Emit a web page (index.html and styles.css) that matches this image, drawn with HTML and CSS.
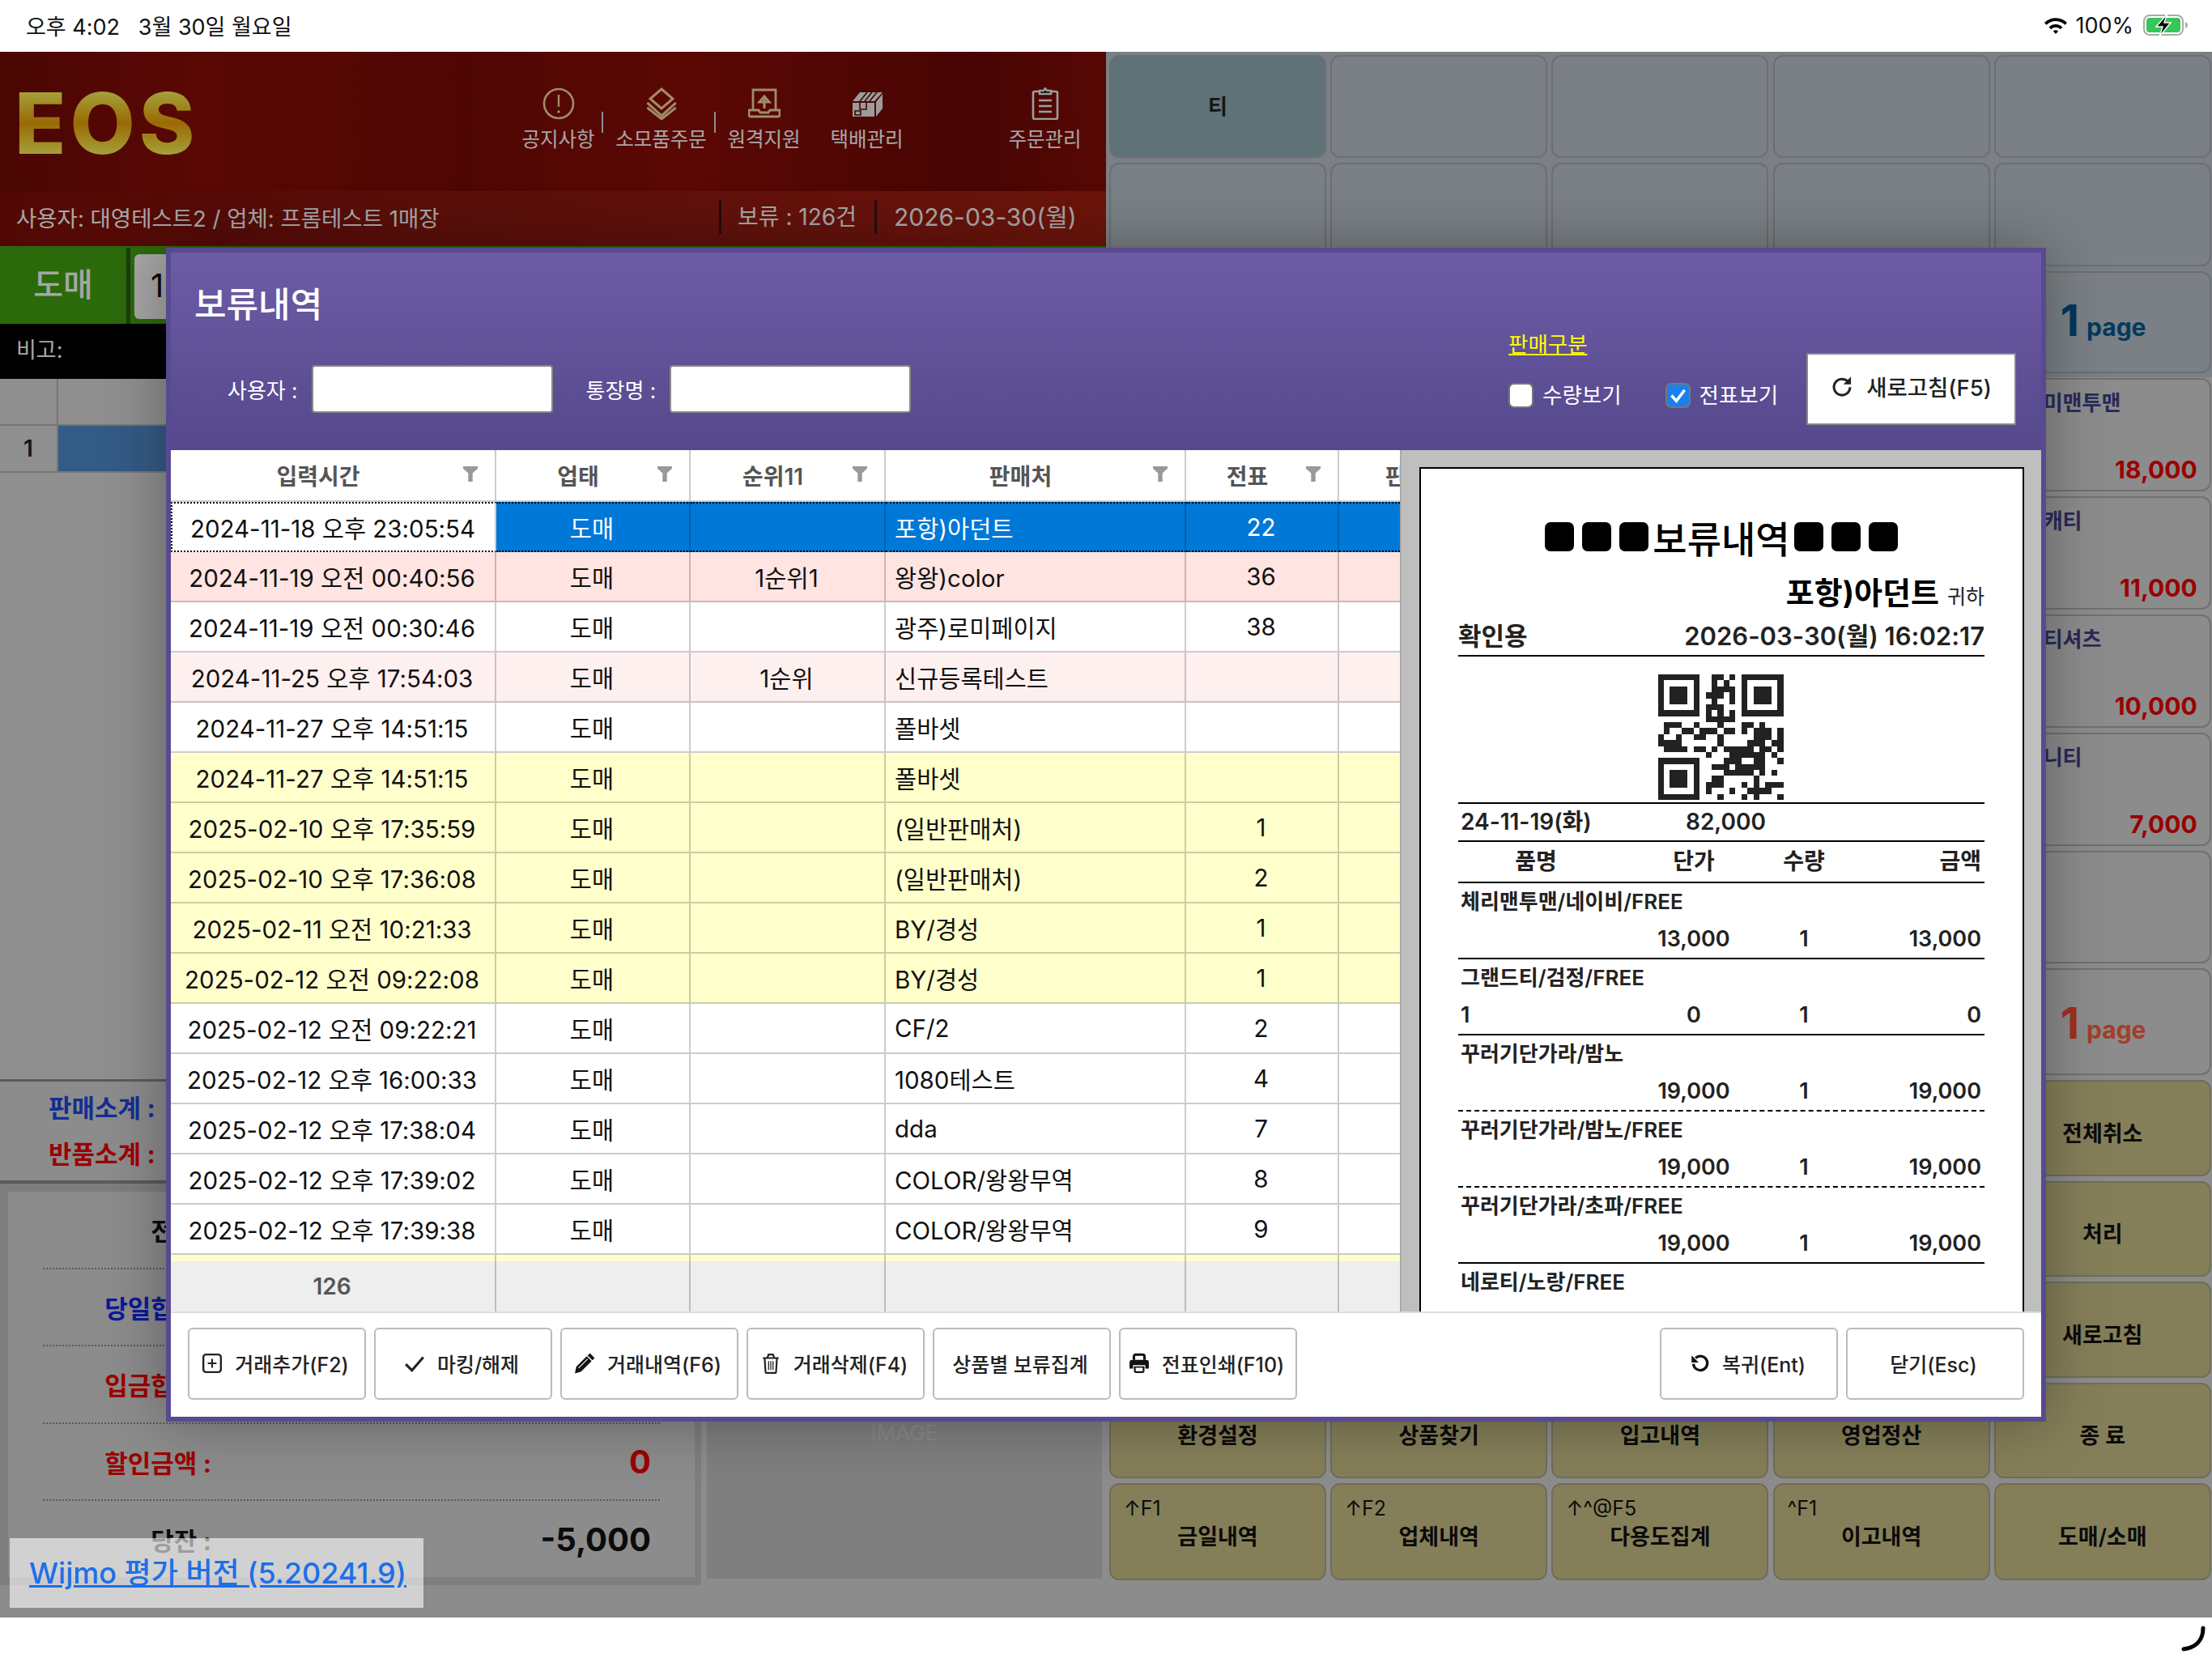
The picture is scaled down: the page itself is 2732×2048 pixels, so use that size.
FILE: index.html
```html
<!DOCTYPE html>
<html lang="ko">
<head>
    <meta charset="UTF-8">
    <title>보류내역</title>
    <link rel="stylesheet" href="styles.css">
</head>
<body>
    <div class="status-bar">
        <span>오후 4:02&nbsp;&nbsp;&nbsp;3월 30일 월요일</span>
        <div class="status-right">
            <svg class="wifi" viewBox="0 0 30 22"><path d="M1 8a20 20 0 0 1 28 0l-2.600 2.800a16 16 0 0 0-22.800 0zM6.600 13.400a12 12 0 0 1 16.800 0l-2.700 2.800a8 8 0 0 0-11.400 0zM11.800 18.600a4.600 4.600 0 0 1 6.400 0L15 22z" fill="#000"/></svg>
            <span>100%</span>
            <svg class="battery" viewBox="0 0 56 28"><rect x="1" y="2" width="48" height="24" rx="7" fill="none" stroke="#aaa" stroke-width="2"/><rect x="4" y="5" width="42" height="18" rx="4" fill="#34c759"/><path d="M52 10c2 1 3 2 3 4s-1 3-3 4z" fill="#aaa"/><path d="M30 0 16 16h8l-4 12 14-17h-8z" fill="#000" stroke="#fff" stroke-width="1.500"/></svg>
        </div>
    </div>

    <div class="app">
        <div class="pos-left">
            <div class="brand-bar">
                <div class="logo">EOS</div>
                <div class="top-nav">
                    <div class="nav-item sep">
                        <svg class="nav-icon tan" viewBox="0 0 40 40"><circle cx="20" cy="20" r="18" fill="none" stroke-width="2.600"/><path d="M20 9v15" stroke-width="2.400"/><circle class="dot" cx="20" cy="30" r="1.800"/></svg>
                        <span>공지사항</span>
                    </div>
                    <div class="nav-item sep sep-wide">
                        <svg class="nav-icon tan" viewBox="0 0 40 40"><path d="M20 2 34 14 20 26 6 14z" fill="none" stroke-width="3"/><path d="M1 19l19 16 19-16M1 25l19 14 19-14" fill="none" stroke-width="3" transform="translate(1.500 0) scale(.93 1)"/></svg>
                        <span>소모품주문</span>
                    </div>
                    <div class="nav-item">
                        <svg class="nav-icon tan" viewBox="0 0 40 40"><path d="M6 27V3h28v24M1 28h12l2 3h10l2-3h12v6a2 2 0 0 1-2 2H3a2 2 0 0 1-2-2z" fill="none" stroke-width="2.800"/><path d="M20 26V13M14 18l6-7 6 7z" stroke-width="3"/></svg>
                        <span>원격지원</span>
                    </div>
                    <div class="nav-item">
                        <svg class="nav-icon" viewBox="0 0 40 40"><path class="box" d="M2 17 11 6h28L29 17zM2 19h27v17H2zM31 18l8-10v18l-8 10z"/><path d="M11 17l9-11M17 17l9-11M23 17l9-11M11 19v8h8v-8M5 29h7v5H5z" stroke="#5a0806" stroke-width="1.600" fill="none"/></svg>
                        <span>택배관리</span>
                    </div>
                    <div class="nav-item last">
                        <svg class="nav-icon grey" viewBox="0 0 40 40"><path d="M13 5H7a2 2 0 0 0-2 2v30a2 2 0 0 0 2 2h26a2 2 0 0 0 2-2V7a2 2 0 0 0-2-2h-6" fill="none" stroke-width="2.600"/><path d="M13 4h5l2-3 2 3h5v4H13z" stroke-width="2.400"/><path d="M12 16h16M12 23h16M12 30h16" stroke-width="2.600"/></svg>
                        <span>주문관리</span>
                    </div>
                </div>
            </div>
            <div class="user-bar">
                <span class="user-name">사용자: 대영테스트2 / 업체: 프롬테스트 1매장</span>
                <span class="hold-count">보류 : 126건</span>
                <span class="today">2026-03-30(월)</span>
            </div>
            <div class="trade-row">
                <div class="trade-type">도매</div>
                <div class="trade-input">1</div>
            </div>
            <div class="memo-row">비고:</div>
            <div class="item-grid">
                <div class="item-line"><div class="item-no"></div><div class="item-cell"></div></div>
                <div class="item-line"><div class="item-no">1</div><div class="item-cell picked"></div></div>
            </div>
            <div class="subtotal">
                <div class="blue">판매소계 :</div>
                <div class="red">반품소계 :</div>
            </div>
            <div class="bottom-panels">
                <div class="summary-wrap">
                    <div class="summary">
                        <div class="sum-row"><b>전잔 :</b><em></em></div>
                        <div class="sum-row blue"><b>당일합계 :</b><em></em></div>
                        <div class="sum-row red"><b>입금합계 :</b><em></em></div>
                        <div class="sum-row red"><b>할인금액 :</b><em>0</em></div>
                        <div class="sum-row"><b>당잔 :</b><em>-5,000</em></div>
                    </div>
                </div>
                <div class="image-box">IMAGE</div>
            </div>
        </div>

        <div class="pos-right">
            <div class="tile-grid">
                <div class="tile cat">티</div><div class="tile"></div><div class="tile"></div><div class="tile"></div><div class="tile"></div>
                <div class="tile"></div><div class="tile"></div><div class="tile"></div><div class="tile"></div><div class="tile"></div>
                <div class="tile tile-last page-tile"><b>1</b><span>page</span></div>
                <div class="tile tile-last goods"><p>체미맨투맨</p><strong>18,000</strong></div>
                <div class="tile tile-last goods"><p>베캐티</p><strong>11,000</strong></div>
                <div class="tile tile-last goods"><p>반티셔츠</p><strong>10,000</strong></div>
                <div class="tile tile-last goods"><p>유니티</p><strong>7,000</strong></div>
                <div class="tile tile-last goods"></div>
                <div class="tile tile-last goods page-tile red-page"><b>1</b><span>page</span></div>
                <div class="tile tile-last func">전체취소</div>
                <div class="tile tile-last func">처리</div>
                <div class="tile tile-last func">새로고침</div>
                <div class="tile func">환경설정</div><div class="tile func">상품찾기</div><div class="tile func">입고내역</div><div class="tile func">영업정산</div><div class="tile func">종 료</div>
                <div class="tile func"><i>↑F1</i>금일내역</div><div class="tile func"><i>↑F2</i>업체내역</div><div class="tile func"><i>↑^@F5</i>다용도집계</div><div class="tile func"><i>^F1</i>이고내역</div><div class="tile func">도매/소매</div>
            </div>
        </div>

        <div class="dim"></div>

        <div class="wijmo-badge"><a href="#">Wijmo 평가 버전 (5.20241.9)</a></div>

        <div class="modal">
            <div class="modal-head">
                <div class="head-left">
                    <h2>보류내역</h2>
                    <div class="search-row">
                        <label>사용자 :</label><div class="text-input"></div>
                        <label class="second">통장명 :</label><div class="text-input"></div>
                    </div>
                </div>
                <div class="head-right">
                    <div class="view-opts">
                        <a href="#">판매구분</a>
                        <div class="checks">
                            <label><span class="check-box"></span>수량보기</label>
                            <label><span class="check-box on"><svg viewBox="0 0 20 20"><path d="M4 10l4.500 5L16 5" fill="none" stroke="#fff" stroke-width="2.600"/></svg></span>전표보기</label>
                        </div>
                    </div>
                    <button class="refresh-btn">
                        <svg viewBox="0 0 24 24"><path d="M18.500 7.500A8.500 8.500 0 1 0 20.500 13" fill="none" stroke="#222" stroke-width="2.600"/><path d="M21.500 2v8h-8z" fill="#222"/></svg>
                        새로고침(F5)
                    </button>
                </div>
            </div>

            <div class="modal-body">
                <div class="hold-grid">
                    <table>
                        <colgroup><col class="c1"><col class="c2"><col class="c3"><col class="c4"><col class="c5"><col class="c6"></colgroup>
                        <thead>
                            <tr><th>입력시간<i class="funnel"></i></th><th>업태<i class="funnel"></i></th><th>순위11<i class="funnel"></i></th><th>판매처<i class="funnel"></i></th><th>전표<i class="funnel"></i></th><th>판매구분</th></tr>
                        </thead>
                        <tbody>
                            <tr class="selected"><td>2024-11-18 오후 23:05:54</td><td>도매</td><td></td><td class="left">포항)아던트</td><td>22</td><td></td></tr>
                            <tr class="rose"><td>2024-11-19 오전 00:40:56</td><td>도매</td><td>1순위1</td><td class="left">왕왕)color</td><td>36</td><td></td></tr>
                            <tr><td>2024-11-19 오전 00:30:46</td><td>도매</td><td></td><td class="left">광주)로미페이지</td><td>38</td><td></td></tr>
                            <tr class="pink"><td>2024-11-25 오후 17:54:03</td><td>도매</td><td>1순위</td><td class="left">신규등록테스트</td><td></td><td></td></tr>
                            <tr><td>2024-11-27 오후 14:51:15</td><td>도매</td><td></td><td class="left">폴바셋</td><td></td><td></td></tr>
                            <tr class="yellow"><td>2024-11-27 오후 14:51:15</td><td>도매</td><td></td><td class="left">폴바셋</td><td></td><td></td></tr>
                            <tr class="yellow"><td>2025-02-10 오후 17:35:59</td><td>도매</td><td></td><td class="left">(일반판매처)</td><td>1</td><td></td></tr>
                            <tr class="yellow"><td>2025-02-10 오후 17:36:08</td><td>도매</td><td></td><td class="left">(일반판매처)</td><td>2</td><td></td></tr>
                            <tr class="yellow"><td>2025-02-11 오전 10:21:33</td><td>도매</td><td></td><td class="left">BY/경성</td><td>1</td><td></td></tr>
                            <tr class="yellow"><td>2025-02-12 오전 09:22:08</td><td>도매</td><td></td><td class="left">BY/경성</td><td>1</td><td></td></tr>
                            <tr><td>2025-02-12 오전 09:22:21</td><td>도매</td><td></td><td class="left">CF/2</td><td>2</td><td></td></tr>
                            <tr><td>2025-02-12 오후 16:00:33</td><td>도매</td><td></td><td class="left">1080테스트</td><td>4</td><td></td></tr>
                            <tr><td>2025-02-12 오후 17:38:04</td><td>도매</td><td></td><td class="left">dda</td><td>7</td><td></td></tr>
                            <tr><td>2025-02-12 오후 17:39:02</td><td>도매</td><td></td><td class="left">COLOR/왕왕무역</td><td>8</td><td></td></tr>
                            <tr><td>2025-02-12 오후 17:39:38</td><td>도매</td><td></td><td class="left">COLOR/왕왕무역</td><td>9</td><td></td></tr>
                            <tr class="yellow sliver"><td></td><td></td><td></td><td></td><td></td><td></td></tr>
                        </tbody>
                        <tfoot>
                            <tr><td>126</td><td></td><td></td><td></td><td></td><td></td></tr>
                        </tfoot>
                    </table>
                </div>

                <div class="preview">
                    <div class="paper">
                        <div class="slip-title"><i></i><i></i><i></i><span>보류내역</span><i></i><i></i><i></i></div>
                        <div class="slip-to"><b>포항)아던트</b><span>귀하</span></div>
                        <div class="slip-info"><span>확인용</span><span>2026-03-30(월) 16:02:17</span></div>
                        <svg class="qr" viewBox="0 0 21 21" shape-rendering="crispEdges">
                            <path d="M0 0h7v7H0zM1 1v5h5V1zM14 0h7v7h-7zM15 1v5h5V1zM0 14h7v7H0zM1 15v5h5v-5z" fill="#222" fill-rule="evenodd"/>
                            <path d="M2 2h3v3H2zM16 2h3v3h-3zM2 16h3v3H2z" fill="#222"/>
                            <path stroke="#222" fill="none" d="M9 .5h2M12 .5h1M9 1.500h1M11 1.500h1M9 2.500h4M8 3.500h3M12 3.500h1M9 4.500h1M12 4.500h1M8 5.500h3M8 6.500h1M10 6.500h1M12 6.500h1M8 7.500h5M1 8.500h3M6 8.500h1M10 8.500h1M14 8.500h2M17 8.500h1M1 9.500h1M4 9.500h2M7 9.500h3M11 9.500h2M14 9.500h1M16 9.500h3M20 9.500h1M0 10.500h1M3 10.500h1M6 10.500h2M10 10.500h1M16 10.500h3M20 10.500h1M0 11.500h4M10 11.500h1M15 11.500h3M19 11.500h2M1 12.500h4M6 12.500h2M9 12.500h1M11 12.500h5M17 12.500h2M20 12.500h1M8 13.500h1M12 13.500h6M19 13.500h1M11 14.500h3M16 14.500h2M20 14.500h1M9 15.500h3M13 15.500h5M11 16.500h5M17 16.500h1M19 16.500h1M9 17.500h2M16 17.500h1M8 18.500h3M14 18.500h1M16 18.500h1M18 18.500h3M8 19.500h1M12 19.500h1M15 19.500h4M10 20.500h1M14 20.500h1M16 20.500h1M20 20.500h1"/>
                        </svg>
                        <div class="slip-date"><span>24-11-19(화)</span><span>82,000</span></div>
                        <div class="slip-cols"><span>품명</span><span>단가</span><span>수량</span><span>금액</span></div>
                        <div class="slip-item">
                            <p>체리맨투맨/네이비/FREE</p>
                            <div class="slip-vals"><span></span><span>13,000</span><span>1</span><span>13,000</span></div>
                        </div>
                        <div class="slip-item">
                            <p>그랜드티/검정/FREE</p>
                            <div class="slip-vals"><span>1</span><span>0</span><span>1</span><span>0</span></div>
                        </div>
                        <div class="slip-item dashed">
                            <p>꾸러기단가라/밤노</p>
                            <div class="slip-vals"><span></span><span>19,000</span><span>1</span><span>19,000</span></div>
                        </div>
                        <div class="slip-item dashed">
                            <p>꾸러기단가라/밤노/FREE</p>
                            <div class="slip-vals"><span></span><span>19,000</span><span>1</span><span>19,000</span></div>
                        </div>
                        <div class="slip-item">
                            <p>꾸러기단가라/초파/FREE</p>
                            <div class="slip-vals"><span></span><span>19,000</span><span>1</span><span>19,000</span></div>
                        </div>
                        <div class="slip-item">
                            <p>네로티/노랑/FREE</p>
                        </div>
                    </div>
                </div>
            </div>

            <div class="modal-foot">
                <button>
                    <svg viewBox="0 0 24 24"><rect x="2" y="2" width="20" height="20" rx="3" fill="none" stroke="#222" stroke-width="2.200"/><path d="M12 7v10M7 12h10" stroke="#222" stroke-width="2"/></svg>
                    거래추가(F2)
                </button>
                <button>
                    <svg viewBox="0 0 24 24"><path d="M2 13l7 7L22 5" fill="none" stroke="#222" stroke-width="2.800"/></svg>
                    마킹/해제
                </button>
                <button>
                    <svg viewBox="0 0 24 24"><path d="M18 .5l5.500 5.500-2.500 2.500-5.500-5.500zM14.500 4l5.500 5.500L8 21.500 1 23.500 2.500 16z" fill="#111"/><path d="M5 17.500 15.500 7" stroke="#fff" stroke-width="1"/></svg>
                    거래내역(F6)
                </button>
                <button>
                    <svg viewBox="0 0 24 24"><path d="M3 6h18M8 6l1.500-4h5L16 6M5 6l1 16a1 1 0 0 0 1 1h10a1 1 0 0 0 1-1l1-16" fill="none" stroke="#222" stroke-width="2"/><path d="M9.500 9.500v10M12 9.500v10M14.500 9.500v10" stroke="#222" stroke-width="1.200"/></svg>
                    거래삭제(F4)
                </button>
                <button>상품별 보류집계</button>
                <button>
                    <svg viewBox="0 0 24 24"><path d="M6 8V4a2 2 0 0 1 2-2h8a2 2 0 0 1 2 2v4" fill="none" stroke="#111" stroke-width="2.800"/><path d="M4 8h16a3 3 0 0 1 3 3v7h-4v-4H5v4H1v-7a3 3 0 0 1 3-3z" fill="#111"/><path d="M6 15.500h12V21a2 2 0 0 1-2 2H8a2 2 0 0 1-2-2z" fill="#111"/><rect x="8" y="17" width="8" height="4" fill="#fff"/></svg>
                    전표인쇄(F10)
                </button>
                <div class="foot-gap"></div>
                <button>
                    <svg viewBox="0 0 24 24"><path d="M5 12.500a8 8 0 1 0 2.500-6.500" fill="none" stroke="#111" stroke-width="3"/><path d="M3 3v8h8z" fill="#111"/></svg>
                    복귀(Ent)
                </button>
                <button>닫기(Esc)</button>
            </div>
        </div>
    </div>

    <div class="home-bar">
        <svg viewBox="0 0 32 32"><path d="M28 3c0 14-8 24-24 26" fill="none" stroke="#000" stroke-width="5" stroke-linecap="round"/></svg>
    </div>
</body>
</html>
```

FILE: styles.css
```css
* {
    box-sizing: border-box;
}

body {
    margin: 0;
    width: 2732px;
    height: 2048px;
    overflow: hidden;
    display: flex;
    flex-direction: column;
    background-color: #fff;
    color: #222;
    font-family: Inter, "Noto Sans CJK KR", sans-serif;
}

/* 상단 상태바 */
.status-bar {
    height: 64px;
    padding: 0 29px 2px 32px;
    display: flex;
    justify-content: space-between;
    align-items: center;
    font-size: 27px;
    color: #111;
}

.status-right {
    display: flex;
    align-items: center;
    gap: 9px;
}

.wifi {
    width: 30px;
    height: 22px;
}

.battery {
    width: 56px;
    height: 28px;
    margin-left: 3px;
}

.app {
    position: relative;
    height: 1934px;
    display: flex;
    background-color: #d7d7d7;
}

.dim {
    position: absolute;
    inset: 0;
    background-color: rgba(0, 0, 0, 0.35);
}

.home-bar {
    height: 50px;
    padding: 10px 7px 0 0;
    display: flex;
    justify-content: flex-end;
}

.home-bar svg {
    width: 32px;
    height: 32px;
}

/* 왼쪽 POS 영역 */
.pos-left {
    width: 1366px;
    padding-bottom: 40px;
    display: flex;
    flex-direction: column;
}

.brand-bar {
    height: 172px;
    display: flex;
    padding-left: 18px;
    background: linear-gradient(90deg, #720a06 0%, #8a0d07 18%, #7a0a05 42%, #8c0d07 62%, #6e0805 88%, #860c07 100%);
}

.logo {
    width: 232px;
    margin-top: 33px;
    font-weight: 800;
    font-size: 104px;
    letter-spacing: 5px;
    line-height: 110px;
    height: 110px;
    white-space: nowrap;
    color: transparent;
    background: linear-gradient(180deg, #fffe5f 12%, #eda308 50%, #fffe5f 88%);
    background-clip: text;
    -webkit-background-clip: text;
}

.top-nav {
    display: flex;
    margin-left: 376px;
    padding-top: 44px;
}

.nav-item {
    position: relative;
    width: 127px;
    display: flex;
    flex-direction: column;
    align-items: center;
    font-size: 24.5px;
    line-height: 34px;
    color: #fff;
}

.nav-item.last {
    margin-left: 93px;
}

.nav-item.sep::after {
    content: "";
    position: absolute;
    right: 8px;
    top: 30px;
    width: 2px;
    height: 26px;
    background-color: #ddd;
}

.nav-item.sep-wide::after {
    right: -4px;
}

.nav-icon {
    width: 40px;
    height: 40px;
    margin-bottom: 7px;
}

.nav-icon.tan path, .nav-icon.tan circle {
    stroke: #f6d7a0;
}

.nav-icon.tan .dot {
    fill: #f6d7a0;
    stroke: none;
}

.nav-icon.grey path {
    stroke: #f2f2f2;
}

.nav-icon .box {
    fill: #f0f0f0;
}

.user-bar {
    height: 68px;
    display: flex;
    align-items: center;
    padding: 0 0 4px 20px;
    font-size: 27.5px;
    color: #fff;
    background: linear-gradient(90deg, #7e0c06 0%, #8c1810 40%, #a52012 100%);
}

.user-name {
    width: 868px;
}

.hold-count, .today {
    height: 42px;
    line-height: 42px;
    border-left: 3px solid #3a1414;
    padding-left: 20px;
}

.hold-count {
    width: 192px;
    font-size: 28px;
}

.today {
    padding-left: 21px;
    font-size: 30px;
}

.trade-row {
    height: 96px;
    display: flex;
    background-color: #42a312;
    border-top: 2px solid #42a312;
}

.trade-type {
    width: 161px;
    border-right: 5px solid #2c5c18;
    text-align: center;
    font-size: 40px;
    line-height: 92px;
    font-weight: 500;
    color: #fff;
}

.trade-input {
    margin: 8px 0 6px 5px;
    width: 200px;
    padding-left: 20px;
    border-radius: 6px;
    background-color: #fff;
    font-size: 40px;
    line-height: 78px;
    color: #111;
}

.memo-row {
    height: 68px;
    padding-left: 20px;
    background-color: #000;
    color: #fff;
    font-size: 27px;
    line-height: 66px;
}

.item-grid {
    flex: 1;
    background-color: #dcdcdc;
}

.item-line {
    display: flex;
    height: 58px;
    border-bottom: 2px solid #b5b5b5;
}

.item-no {
    width: 72px;
    border-right: 2px solid #b5b5b5;
    text-align: center;
    font-size: 28px;
    line-height: 56px;
    font-weight: 600;
}

.item-cell {
    flex: 1;
}

.item-cell.picked {
    background-color: #508ccd;
}

.subtotal {
    height: 129px;
    padding: 4px 0 0 60px;
    border-top: 3px solid #8a8a95;
    border-bottom: 4px solid #8a8a95;
    font-size: 31px;
    line-height: 57px;
    font-weight: 700;
}

.blue {
    color: #1f48e0;
}

.red {
    color: #f20000;
}

.bottom-panels {
    height: 496px;
    display: flex;
    background-color: #d7d7d7;
}

.summary-wrap {
    width: 866px;
    padding: 10px 8px 10px 10px;
    background-color: #c2c2c2;
}

.summary {
    height: 100%;
    padding: 0 43px 0 43px;
    display: flex;
    flex-direction: column;
    background-color: #d7d7d7;
}

.sum-row {
    flex: 1;
    display: flex;
    justify-content: space-between;
    align-items: center;
    padding-right: 11px;
    border-bottom: 2px dotted #888;
    color: #111;
}

.sum-row:last-child {
    border-bottom: none;
}

.sum-row.blue {
    color: #1028ee;
}

.sum-row.red {
    color: #f20000;
}

.sum-row b {
    width: 208px;
    text-align: right;
    font-size: 31px;
}

.sum-row em {
    font-style: normal;
    font-weight: 700;
    font-size: 40px;
}

.image-box {
    width: 488px;
    margin-left: 7px;
    margin-bottom: 8px;
    background-color: #c4c4c4;
    text-align: center;
    color: #d4d4d4;
    font-size: 26px;
    padding-top: 292px;
}

/* 오른쪽 버튼 영역 */
.pos-right {
    flex: 1;
    padding: 4px 0 0 4px;
    background: linear-gradient(180deg, #bcc5cd 0, #bcc5cd 402px, #d7d7d7 402px);
}

.tile-grid {
    display: grid;
    grid-template-columns: repeat(5, 268px);
    grid-template-rows: 127px 128px 126px 140px 140px 140px 140px 139px 132px 119px 118px 119px 118px 120px;
    column-gap: 5.2px;
    row-gap: 6px;
}

.tile {
    position: relative;
    border: 2px solid #a5abb0;
    border-radius: 12px;
    background-color: #bcc5cd;
}

.tile-last {
    grid-column: 5;
}

.tile.cat {
    display: flex;
    justify-content: center;
    align-items: center;
    padding-bottom: 4px;
    background-color: #92afb9;
    font-size: 26px;
    font-weight: 700;
}

.page-tile {
    display: flex;
    align-items: baseline;
    gap: 9px;
    padding: 30px 0 0 80px;
    color: #005a90;
}

.page-tile b {
    font-size: 54px;
    line-height: 58px;
    color: #005590;
}

.page-tile span {
    font-size: 30px;
    font-weight: 700;
}

.goods {
    padding: 13px 15px 0 35px;
    background-color: #d7d7d7;
    border-color: #adadad;
}

.goods p {
    margin: 0;
    font-size: 26px;
    line-height: 32px;
    font-weight: 700;
    color: #41418a;
}

.goods strong {
    display: block;
    margin-top: 48px;
    text-align: right;
    font-size: 30px;
    line-height: 36px;
    color: #ee0000;
}

.red-page {
    padding: 37px 0 0 80px;
    color: #fa6040;
}

.red-page b {
    color: #f54a32;
}

.func {
    display: flex;
    justify-content: center;
    align-items: center;
    padding-top: 9px;
    background-color: #cdc389;
    border-color: #aca88a;
    font-size: 27px;
    font-weight: 600;
    color: #111;
}

.func i {
    position: absolute;
    left: 16px;
    top: 14px;
    font-style: normal;
    font-weight: 400;
    font-size: 25px;
    line-height: 30px;
}

/* 보류내역 모달 */
.modal {
    position: absolute;
    left: 205px;
    top: 242px;
    width: 2322px;
    height: 1450px;
    display: flex;
    flex-direction: column;
    border: 6px solid #584a90;
    background-color: #fff;
    box-shadow: 0 0 70px rgba(0, 0, 0, 0.32);
}

.modal-head {
    height: 244px;
    display: flex;
    justify-content: space-between;
    align-items: flex-end;
    padding-bottom: 31px;
    color: #fff;
    background: linear-gradient(180deg, #6c5ca6 0%, #56488c 100%);
}

.head-left {
    align-self: flex-start;
    padding-top: 33px;
}

.head-left h2 {
    margin: 0 0 44px 29px;
    font-size: 43px;
    line-height: 62px;
    font-weight: 500;
}

.search-row {
    display: flex;
    align-items: center;
    padding-left: 70px;
    font-size: 26px;
}

.search-row label {
    margin-right: 17px;
}

.search-row .second {
    margin-left: 41px;
}

.text-input {
    width: 298px;
    height: 59px;
    border: 2px solid #888;
    border-radius: 4px;
    background-color: #fff;
}

.head-right {
    display: flex;
    align-items: flex-end;
    padding-right: 31px;
}

.view-opts {
    width: 368px;
    padding-bottom: 21px;
}

.view-opts a {
    display: block;
    margin-bottom: 30px;
    font-size: 26.5px;
    line-height: 34px;
    color: #ffff00;
    text-decoration: underline;
}

.checks {
    display: flex;
    gap: 54px;
    font-size: 26.5px;
    line-height: 32px;
}

.checks label {
    display: flex;
    align-items: center;
    gap: 11px;
}

.check-box {
    width: 31px;
    height: 31px;
    border: 2px solid #777;
    border-radius: 7px;
    background-color: #fff;
}

.check-box.on {
    background-color: #1a7ff0;
}

.check-box svg {
    display: block;
    width: 27px;
    height: 27px;
}

.refresh-btn {
    width: 259px;
    height: 89px;
    display: flex;
    justify-content: center;
    align-items: center;
    gap: 16px;
    padding-bottom: 8px;
    border: 2px solid #888;
    border-radius: 0;
    background-color: #fff;
    color: #222;
    font-family: inherit;
    font-size: 27.5px;
    font-weight: 500;
}

.refresh-btn svg {
    width: 28px;
    height: 28px;
}

.modal-body {
    height: 1064px;
    display: flex;
    background-color: #fff;
}

.hold-grid {
    width: 1520px;
    overflow: hidden;
    border-right: 2px solid #aaa;
}

.hold-grid table {
    width: 1698px;
    table-layout: fixed;
    border-collapse: separate;
    border-spacing: 0;
}

.c1 { width: 402px; }
.c2 { width: 240px; }
.c3 { width: 241px; }
.c4 { width: 371px; }
.c5 { width: 189px; }
.c6 { width: 255px; }

.hold-grid th {
    position: relative;
    height: 64px;
    padding: 0 36px 0 0;
    border-right: 2px solid #ccc;
    border-bottom: 2px solid #ccc;
    font-size: 28px;
    font-weight: 600;
    color: #555;
}

.funnel {
    position: absolute;
    right: 21px;
    top: 20px;
    width: 18px;
    height: 19px;
    background-color: #999;
    clip-path: polygon(0 0, 100% 0, 100% 15%, 65% 45%, 65% 100%, 35% 100%, 35% 45%, 0 15%);
}

.hold-grid td {
    height: 62px;
    padding: 0 2px 0 0;
    border-right: 2px solid rgba(0, 0, 0, 0.2);
    border-bottom: 2px solid rgba(0, 0, 0, 0.2);
    text-align: center;
    font-size: 29.5px;
    color: #111;
    white-space: nowrap;
}

.hold-grid td.left {
    padding-left: 11px;
    text-align: left;
}

.selected td {
    background-color: #0078d7;
    color: #fff;
    border-top: 2px dotted #000;
    border-bottom: 2px dotted #000;
}

.selected td:first-child {
    background-color: #fff;
    color: #111;
    border-left: 2px dotted #000;
}

.rose td {
    background-color: #ffe4e1;
}

.pink td {
    background-color: #fff0f0;
}

.yellow td {
    background-color: #ffffcc;
}

.hold-grid .sliver td {
    height: 8px;
    border-bottom: none;
}

.hold-grid tfoot td {
    height: 62px;
    background-color: #eee;
    border-bottom: none;
    font-size: 28px;
    font-weight: 600;
    color: #555;
}

.preview {
    flex: 1;
    padding: 21px 21px 0 22px;
    overflow: hidden;
    background-color: #bfbfbf;
}

.paper {
    height: 1100px;
    padding: 59px 47px 0 46px;
    border: 2px solid #000;
    background-color: #fff;
    color: #222;
}

.slip-title {
    display: flex;
    justify-content: center;
    align-items: center;
    gap: 10px;
    height: 50px;
    font-size: 46px;
    font-weight: 500;
    color: #000;
}

.slip-title span {
    margin: 0 -5px;
}

.slip-title i {
    width: 36px;
    height: 36px;
    border-radius: 7px;
    background-color: #000;
}

.slip-to {
    margin-top: 22px;
    height: 44px;
    display: flex;
    justify-content: flex-end;
    align-items: baseline;
    gap: 10px;
    font-size: 25px;
    line-height: 44px;
}

.slip-to b {
    font-size: 38px;
    font-weight: 700;
    color: #000;
}

.slip-info {
    margin-top: 10px;
    display: flex;
    justify-content: space-between;
    border-bottom: 2px solid #000;
    font-size: 31px;
    line-height: 44px;
    font-weight: 600;
    padding-bottom: 1px;
}

.qr {
    display: block;
    width: 156px;
    height: 155px;
    margin: 22px auto 3px;
    transform: translateX(-1px);
}

.slip-date {
    display: flex;
    height: 49px;
    padding-left: 3px;
    border-top: 2px solid #000;
    border-bottom: 2px solid #000;
    font-size: 28px;
    line-height: 44px;
    font-weight: 600;
}

.slip-date span:first-child {
    width: 278px;
}

.slip-cols, .slip-vals {
    display: grid;
    grid-template-columns: 192px 198px 74px 184px;
    font-weight: 600;
}

.slip-cols {
    height: 51px;
    border-bottom: 2px solid #000;
    font-size: 28px;
    line-height: 49px;
    text-align: center;
}

.slip-cols span:nth-child(4), .slip-vals span:nth-child(4) {
    text-align: right;
    padding-right: 2px;
}

.slip-vals span:nth-child(2), .slip-vals span:nth-child(3) {
    text-align: center;
}

.slip-vals span:first-child {
    padding-left: 3px;
}

.slip-item {
    height: 94px;
    border-bottom: 2px solid #000;
}

.slip-item.dashed {
    border-bottom: 2px dashed #000;
}

.slip-item p {
    margin: 0;
    padding-left: 3px;
    font-size: 26px;
    line-height: 46px;
    font-weight: 600;
}

.slip-vals {
    font-size: 27px;
    line-height: 46px;
}

.modal-foot {
    flex: 1;
    display: flex;
    gap: 10px;
    padding: 18px 21px 0;
    border-top: 2px solid #ddd;
}

.modal-foot button {
    width: 220px;
    height: 89px;
    display: flex;
    justify-content: center;
    align-items: center;
    gap: 15px;
    padding: 0 4px 2px 0;
    border: 2px solid #bbb;
    border-radius: 6px;
    background-color: #fff;
    color: #222;
    font-family: inherit;
    font-size: 25px;
    font-weight: 500;
}

.modal-foot svg {
    width: 26px;
    height: 26px;
}

.foot-gap {
    flex: 1;
}

.wijmo-badge {
    position: absolute;
    left: 12px;
    top: 1836px;
    width: 511px;
    height: 86px;
    padding-left: 24px;
    background-color: rgba(255, 255, 255, 0.6);
    font-size: 36px;
    font-weight: 500;
    line-height: 86px;
}

.wijmo-badge a {
    color: #1d6fe8;
}
```
